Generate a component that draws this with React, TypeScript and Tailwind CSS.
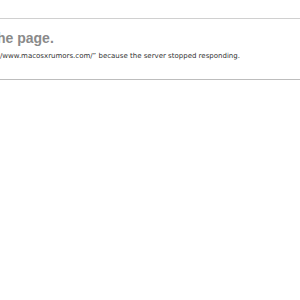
export default function App() {
  return (
    <div className="w-[300px] h-[300px] bg-white overflow-hidden" style={{ fontFamily: '"DejaVu Sans", Verdana, sans-serif' }}>
      <div className="h-[18px]" />
      {/* Error panel */}
      <div className="border-t border-b border-t-[#d0d0d0] border-b-[#bdbdbd] h-[62px] pt-[11px]">
        <h1
          className="ml-[-3px] whitespace-nowrap text-[14px] leading-[16px] font-bold text-[#8a8a8a]"
          style={{ fontFamily: '"Liberation Sans", Arial, sans-serif' }}
        >
          he page.
        </h1>
        <p className="mt-[5px] whitespace-nowrap text-[7px] leading-[10px] text-[#333]">
          /www.macosxrumors.com/” because the server stopped responding.
        </p>
      </div>
    </div>
  )
}
